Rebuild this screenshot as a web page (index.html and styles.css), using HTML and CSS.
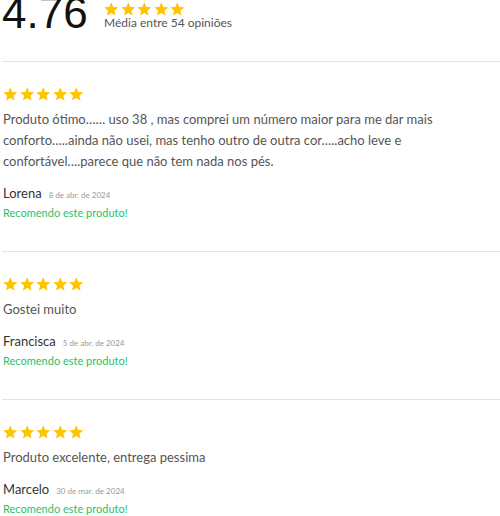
FILE: index.html
```html
<!DOCTYPE html>
<html lang="pt-BR">
<head>
<meta charset="utf-8">
<title>Avaliações</title>
<link rel="stylesheet" href="styles.css">
</head>
<body>
<svg width="0" height="0" class="defs" aria-hidden="true">
  <defs>
    <symbol id="star" viewBox="1.6 1.6 20.8 20">
      <path d="M12 17.27L18.18 21l-1.64-7.03L22 9.24l-7.19-.61L12 2 9.19 8.63 2 9.24l5.46 4.73L5.82 21z"/>
    </symbol>
  </defs>
</svg>
<section class="reviews">
  <div class="summary">
    <div class="score">4.76</div>
    <div class="summary-info">
      <div class="stars"><svg><use href="#star"/></svg><svg><use href="#star"/></svg><svg><use href="#star"/></svg><svg><use href="#star"/></svg><svg><use href="#star"/></svg></div>
      <div class="summary-text">Média entre 54 opiniões</div>
    </div>
  </div>

  <article class="review">
    <div class="stars"><svg><use href="#star"/></svg><svg><use href="#star"/></svg><svg><use href="#star"/></svg><svg><use href="#star"/></svg><svg><use href="#star"/></svg></div>
    <p class="review-text">Produto ótimo…… uso 38 , mas comprei um número maior para me dar mais conforto…..ainda não usei, mas tenho outro de outra cor…..acho leve e confortável….parece que não tem nada nos pés.</p>
    <div class="author"><span class="name">Lorena</span><span class="date">8 de abr. de 2024</span></div>
    <div class="recommend">Recomendo este produto!</div>
  </article>

  <article class="review">
    <div class="stars"><svg><use href="#star"/></svg><svg><use href="#star"/></svg><svg><use href="#star"/></svg><svg><use href="#star"/></svg><svg><use href="#star"/></svg></div>
    <p class="review-text">Gostei muito</p>
    <div class="author"><span class="name">Francisca</span><span class="date">5 de abr. de 2024</span></div>
    <div class="recommend">Recomendo este produto!</div>
  </article>

  <article class="review">
    <div class="stars"><svg><use href="#star"/></svg><svg><use href="#star"/></svg><svg><use href="#star"/></svg><svg><use href="#star"/></svg><svg><use href="#star"/></svg></div>
    <p class="review-text">Produto excelente, entrega pessima</p>
    <div class="author"><span class="name">Marcelo</span><span class="date">30 de mar. de 2024</span></div>
    <div class="recommend">Recomendo este produto!</div>
  </article>
</section>
</body>
</html>
```
FILE: styles.css
```css
html, body {
  margin: 0;
  padding: 0;
  background: #fff;
}
body {
  font-family: Lato, "Noto Sans", sans-serif;
  color: #4a4a4a;
  overflow: hidden;
}
.defs {
  position: absolute;
  width: 0;
  height: 0;
}
.reviews {
  display: flex;
  flex-direction: column;
}
.summary {
  display: flex;
  align-items: flex-start;
  margin-top: -9px;
  padding-left: 2px;
  height: 70px;
}
.score {
  font-family: "Liberation Sans", Arial, sans-serif;
  font-size: 44px;
  line-height: 44px;
  color: #111;
  width: 102px;
}
.summary-info {
  display: flex;
  flex-direction: column;
  padding-top: 11px;
}
.summary-text {
  font-size: 12px;
  line-height: 12px;
  color: #555;
  margin-top: 0;
}
.stars {
  display: flex;
  gap: 2px;
  height: 15px;
}
.stars svg {
  width: 14.5px;
  height: 14px;
  fill: #ffc400;
}
.review {
  margin-left: 2px;
  border-top: 1px solid #e3e3e3;
  padding: 25px 0 29px 1px;
}
.review-text {
  margin: 7px 0 0;
  font-size: 13px;
  line-height: 21px;
  color: #555;
}
.author {
  margin-top: 12px;
  display: flex;
  align-items: baseline;
  line-height: 18px;
}
.name {
  font-size: 13px;
  color: #333;
}
.date {
  font-size: 8px;
  color: #999;
  margin-left: 7px;
}
.recommend {
  font-size: 11px;
  line-height: 18px;
  color: #2bbf6a;
}
```
